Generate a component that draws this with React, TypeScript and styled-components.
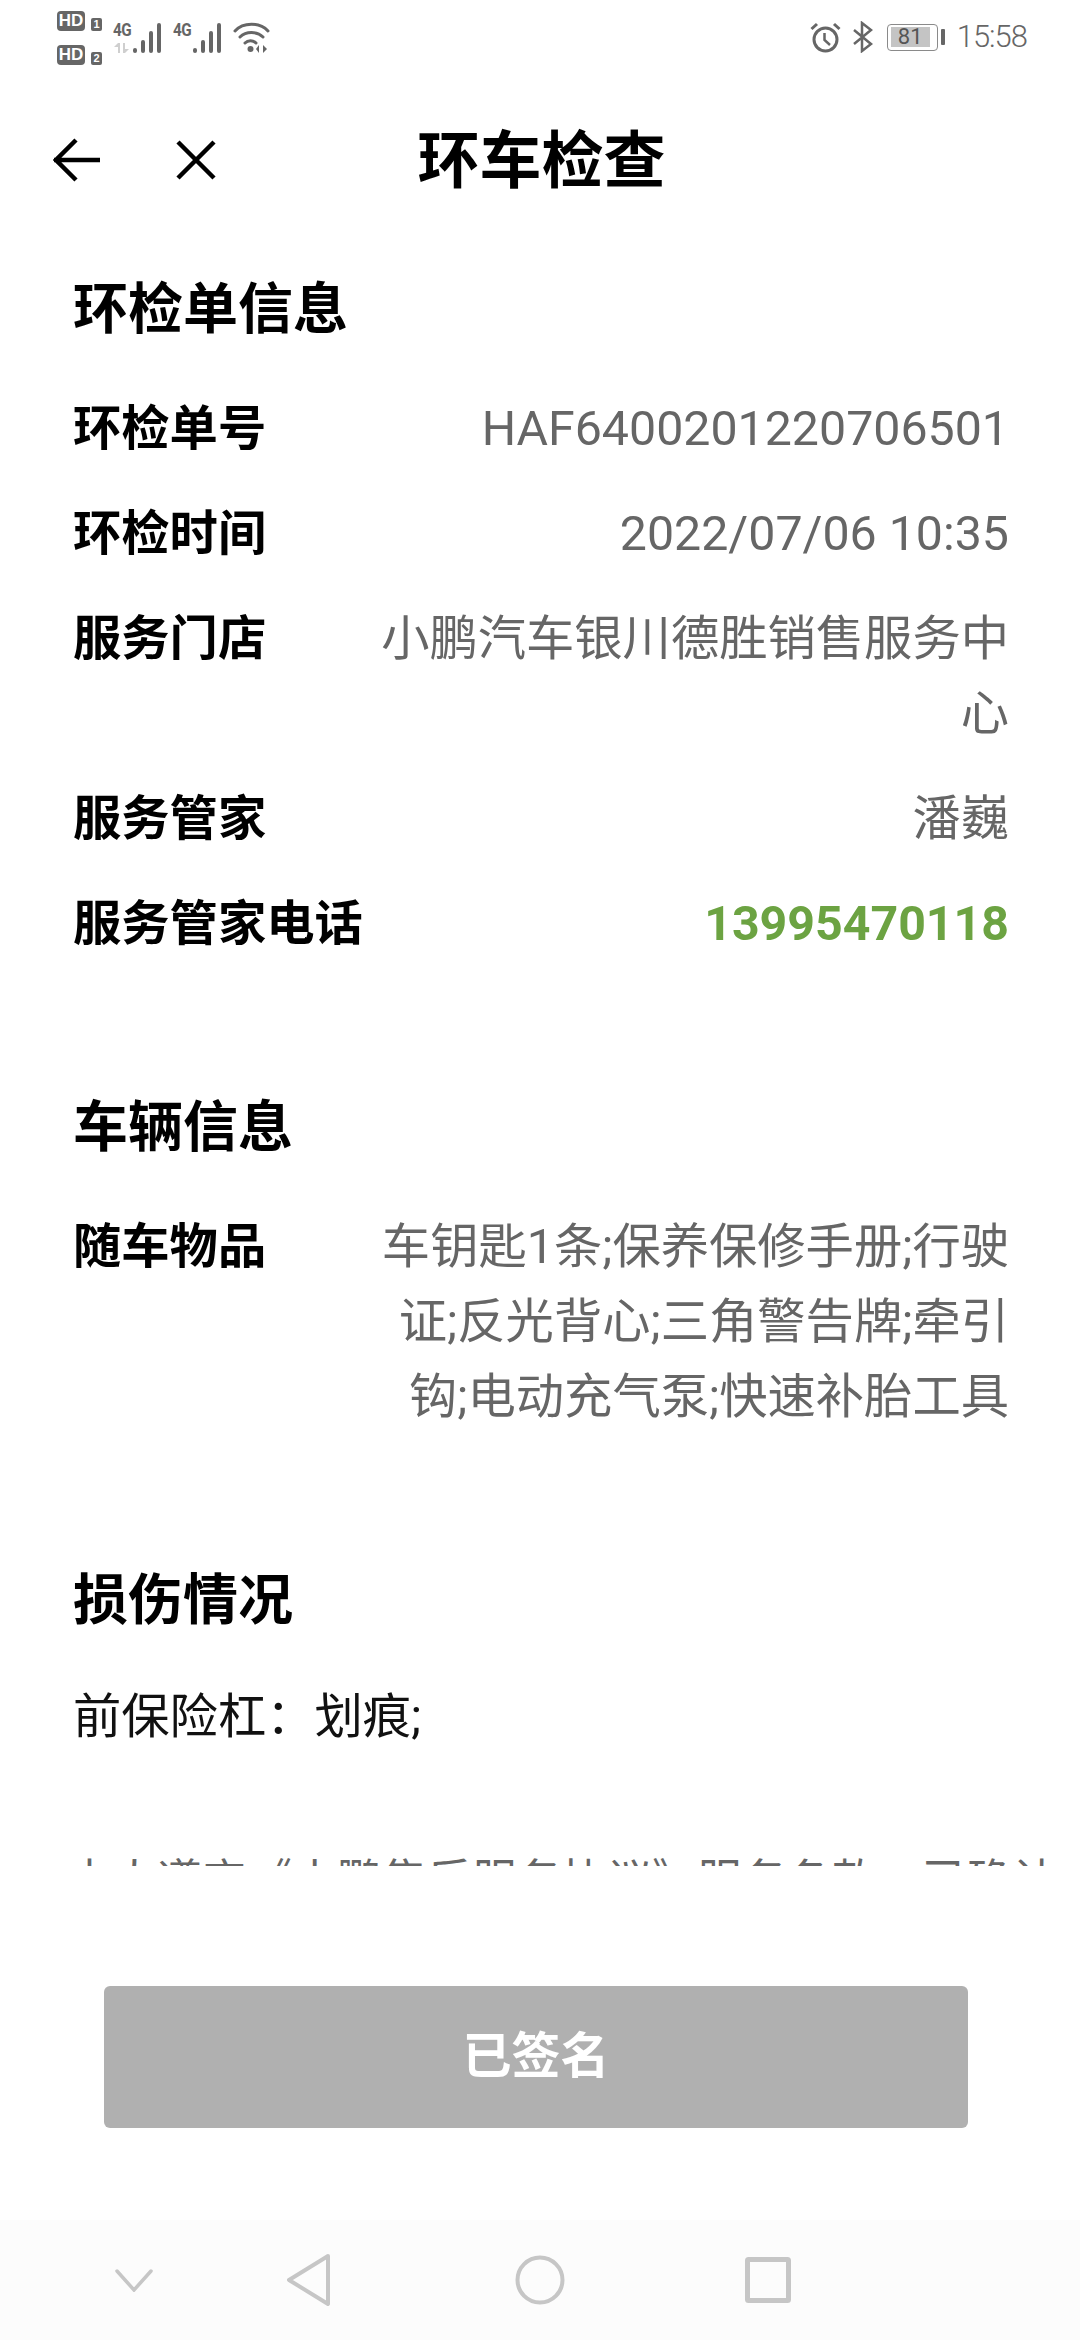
import React, { FC } from 'react'
import styled, { createGlobalStyle } from 'styled-components'

const FONT = `Roboto, "Noto Sans CJK SC", sans-serif`
const GRAY = '#666666'
const NAV = '#c6c6c6'

const GlobalStyle = createGlobalStyle`
  html, body {
    margin: 0;
    padding: 0;
    background: #ffffff;
  }
  * {
    box-sizing: border-box;
  }
`

type InfoRowProps = {
  label: string
  value: string
  green?: boolean
}

const InfoRow: FC<InfoRowProps> = ({ label, value, green }) => {
  return (
    <Row>
      <Label>{label}</Label>
      <Value green={green}>{value}</Value>
    </Row>
  )
}

const HdBadge: FC<{ n: number }> = ({ n }) => (
  <HdRow>
    <Hd>HD</Hd>
    <HdNum>{n}</HdNum>
  </HdRow>
)

const Signal: FC<{ arrows?: boolean }> = ({ arrows }) => (
  <SignalBox>
    <SignalText>
      <FourG>4G</FourG>
      {arrows && (
        <svg width="18" height="10" viewBox="0 0 18 10" fill="#cfcfcf">
          <path d="M5 0 V10 H7 V0 Z M1 4 L5 0 V4 Z M10 0 H12 V10 H10 Z M12 6 H16 L12 10 Z" />
        </svg>
      )}
    </SignalText>
    <svg width="30" height="31" viewBox="0 0 30 31">
      {[5, 13, 22, 30].map((h, i) => (
        <rect key={i} x={1 + i * 8} y={31 - h} width="4" height={h} rx="2" fill={GRAY} />
      ))}
    </svg>
  </SignalBox>
)

export default function App() {
  return (
    <Page>
      <GlobalStyle />
      <StatusBar>
        <StatusLeft>
          <HdColumn>
            <HdBadge n={1} />
            <HdBadge n={2} />
          </HdColumn>
          <Signal arrows />
          <Signal />
          <WifiIcon width="37" height="31" viewBox="0 0 37 31" fill="none" stroke={GRAY} strokeLinecap="round">
            <path d="M2 9 C10 0 27 0 35 9" strokeWidth="3" />
            <path d="M7 15 C13 9 24 9 30 15" strokeWidth="3" />
            <path d="M12 21 C15 18 20 18 23 21" strokeWidth="3" />
            <circle cx="17.5" cy="27" r="3" fill={GRAY} stroke="none" />
            <path d="M26 23 V31 L23 27 Z M30 23 V31 L34 27 Z" fill={GRAY} stroke="none" />
          </WifiIcon>
        </StatusLeft>
        <StatusRight>
          <svg width="31" height="31" viewBox="0 0 31 31" fill="none" stroke={GRAY} strokeWidth="3">
            <circle cx="15.5" cy="17.5" r="11.5" />
            <path d="M14.5 11 V18 L20 23" strokeWidth="2.5" />
            <path d="M1.5 7 L7 2 M29.5 7 L24 2" strokeWidth="3" />
          </svg>
          <svg width="20" height="32" viewBox="0 0 20 32" fill="none" stroke={GRAY} strokeWidth="2.5">
            <path d="M1 9 L18 23 L9 30 V2 L18 9 L1 23" />
          </svg>
          <Battery>
            <BatteryBody>
              <BatteryFill>81</BatteryFill>
            </BatteryBody>
            <BatteryTip />
          </Battery>
          <Clock>15:58</Clock>
        </StatusRight>
      </StatusBar>

      <Header>
        <HeaderIcons>
          <svg width="48" height="44" viewBox="0 0 48 44" fill="none" stroke="#000" strokeWidth="4.5">
            <path d="M1 22 H47 M23 2 L3 22 L23 42" />
          </svg>
          <svg width="40" height="40" viewBox="0 0 40 40" fill="none" stroke="#000" strokeWidth="4.5">
            <path d="M2 2 L38 38 M38 2 L2 38" />
          </svg>
        </HeaderIcons>
        <Title>环车检查</Title>
      </Header>

      <Scroll>
        <Section>
          <SectionTitle>环检单信息</SectionTitle>
          <InfoRow label="环检单号" value="HAF6400201220706501" />
          <InfoRow label="环检时间" value="2022/07/06 10:35" />
          <InfoRow label="服务门店" value="小鹏汽车银川德胜销售服务中心" />
          <InfoRow label="服务管家" value="潘巍" />
          <InfoRow label="服务管家电话" value="13995470118" green />
        </Section>
        <Section>
          <SectionTitle>车辆信息</SectionTitle>
          <InfoRow label="随车物品" value="车钥匙1条;保养保修手册;行驶证;反光背心;三角警告牌;牵引钩;电动充气泵;快速补胎工具" />
        </Section>
        <Section>
          <SectionTitle>损伤情况</SectionTitle>
          <Damage>前保险杠：划痕;</Damage>
        </Section>
        <Agreement>本人遵守《小鹏售后服务协议》服务条款，已确认</Agreement>
      </Scroll>

      <Footer>
        <SignedButton>已签名</SignedButton>
      </Footer>

      <NavBar>
        <svg width="40" height="24" viewBox="0 0 40 24" fill="none" stroke={NAV} strokeWidth="3.5" strokeLinecap="round">
          <path d="M3 3 L20 22 L37 3" />
        </svg>
        <svg width="44" height="52" viewBox="0 0 44 52" fill="none" stroke={NAV} strokeWidth="4" strokeLinejoin="round">
          <path d="M41 2 L2 26 L41 50 Z" />
        </svg>
        <svg width="50" height="50" viewBox="0 0 50 50" fill="none" stroke={NAV} strokeWidth="4">
          <circle cx="25" cy="25" r="22.5" />
        </svg>
        <svg width="46" height="46" viewBox="0 0 46 46" fill="none" stroke={NAV} strokeWidth="5" strokeLinejoin="round">
          <rect x="2.5" y="2.5" width="41" height="41" rx="1" />
        </svg>
      </NavBar>
    </Page>
  )
}

const Page = styled.div`
  width: 1080px;
  height: 2340px;
  display: flex;
  flex-direction: column;
  background: #ffffff;
  font-family: ${FONT};
  overflow: hidden;
`

const StatusBar = styled.div`
  height: 78px;
  padding: 11px 53px 0 57px;
  display: flex;
  justify-content: space-between;
  align-items: flex-start;
`

const StatusLeft = styled.div`
  display: flex;
  align-items: flex-start;
  gap: 11px;
`

const HdColumn = styled.div`
  display: flex;
  flex-direction: column;
  gap: 14px;
`

const HdRow = styled.div`
  display: flex;
  align-items: flex-end;
  gap: 6px;
`

const Hd = styled.div`
  width: 28px;
  height: 20px;
  border-radius: 4px;
  background: ${GRAY};
  color: #ffffff;
  font: 700 17px/20px "Liberation Sans", sans-serif;
  text-align: center;
`

const HdNum = styled.div`
  width: 11px;
  height: 13px;
  border-radius: 2px;
  background: ${GRAY};
  color: #ffffff;
  font: 700 11px/13px "Liberation Sans", sans-serif;
  text-align: center;
`

const SignalBox = styled.div`
  display: flex;
  align-items: flex-end;
  height: 31px;
  margin-top: 11px;
`

const SignalText = styled.div`
  display: flex;
  flex-direction: column;
  justify-content: flex-start;
  gap: 6px;
  width: 19px;
  height: 31px;
`

const FourG = styled.div`
  color: ${GRAY};
  font: 700 18px/15px Roboto, sans-serif;
  letter-spacing: -0.5px;
  transform: scaleX(0.85);
  transform-origin: left center;
  white-space: nowrap;
`

const WifiIcon = styled.svg`
  margin-top: 11px;
`

const StatusRight = styled.div`
  display: flex;
  align-items: center;
  height: 52px;
  gap: 12px;
`

const Battery = styled.div`
  display: flex;
  align-items: center;
  gap: 3px;
  margin-left: 2px;
`

const BatteryBody = styled.div`
  width: 51px;
  height: 27px;
  padding: 2.5px 3px;
  border: 1.5px solid #8a8a8a;
  border-radius: 4px;
`

const BatteryFill = styled.div`
  width: 39px;
  height: 100%;
  background: #c4c4c4;
  color: #555555;
  font: 400 22px/20px Roboto, sans-serif;
  text-align: center;
`

const BatteryTip = styled.div`
  width: 4px;
  height: 16px;
  background: ${GRAY};
  border-radius: 1px;
`

const Clock = styled.div`
  color: ${GRAY};
  font: 300 31px/34px Roboto, sans-serif;
  letter-spacing: -1px;
`

const Header = styled.div`
  position: relative;
  height: 164px;
  display: flex;
  align-items: center;
  justify-content: center;
`

const HeaderIcons = styled.div`
  position: absolute;
  left: 53px;
  top: 0;
  bottom: 0;
  display: flex;
  align-items: center;
  gap: 75px;
`

const Title = styled.div`
  font-size: 62px;
  font-weight: 700;
  color: #000000;
  line-height: 80px;
  margin-left: 3px;
  padding-top: 4px;
`

const Scroll = styled.div`
  height: 1624px;
  padding: 21px 71px 0 73px;
  overflow: hidden;
`

const Section = styled.div`
  padding-top: 8px;
  padding-bottom: 90px;
`

const SectionTitle = styled.div`
  font-size: 55px;
  font-weight: 700;
  line-height: 76px;
  color: #000000;
  margin-bottom: 44px;
`

const Row = styled.div`
  display: flex;
  justify-content: space-between;
  margin-bottom: 30px;
`

const Label = styled.div`
  flex: none;
  font-size: 48.3px;
  font-weight: 700;
  line-height: 75px;
  color: #000000;
`

const Value = styled.div<{ green?: boolean }>`
  flex: none;
  width: 640px;
  text-align: right;
  font-size: 48.3px;
  line-height: 75px;
  font-weight: ${({ green }) => (green ? 700 : 400)};
  color: ${({ green }) => (green ? '#6ca342' : GRAY)};
`

const Damage = styled.div`
  font-size: 48.3px;
  line-height: 75px;
  color: #111111;
  margin-top: -3px;
`

const Agreement = styled.div`
  font-size: 45px;
  line-height: 75px;
  color: ${GRAY};
  white-space: nowrap;
  margin-left: -6px;
`

const Footer = styled.div`
  flex: 1;
  display: flex;
  justify-content: center;
  padding: 120px 0 0 0;
`

const SignedButton = styled.div`
  width: 864px;
  height: 142px;
  background: #b0b0b0;
  border-radius: 6px;
  margin-right: 8px;
  color: #ffffff;
  font-size: 49px;
  font-weight: 700;
  line-height: 142px;
  text-align: center;
`

const NavBar = styled.div`
  height: 120px;
  background: #fcfcfc;
  display: grid;
  grid-template-columns: 268px 82px 380px 76px;
  align-items: center;
  justify-items: center;
`
